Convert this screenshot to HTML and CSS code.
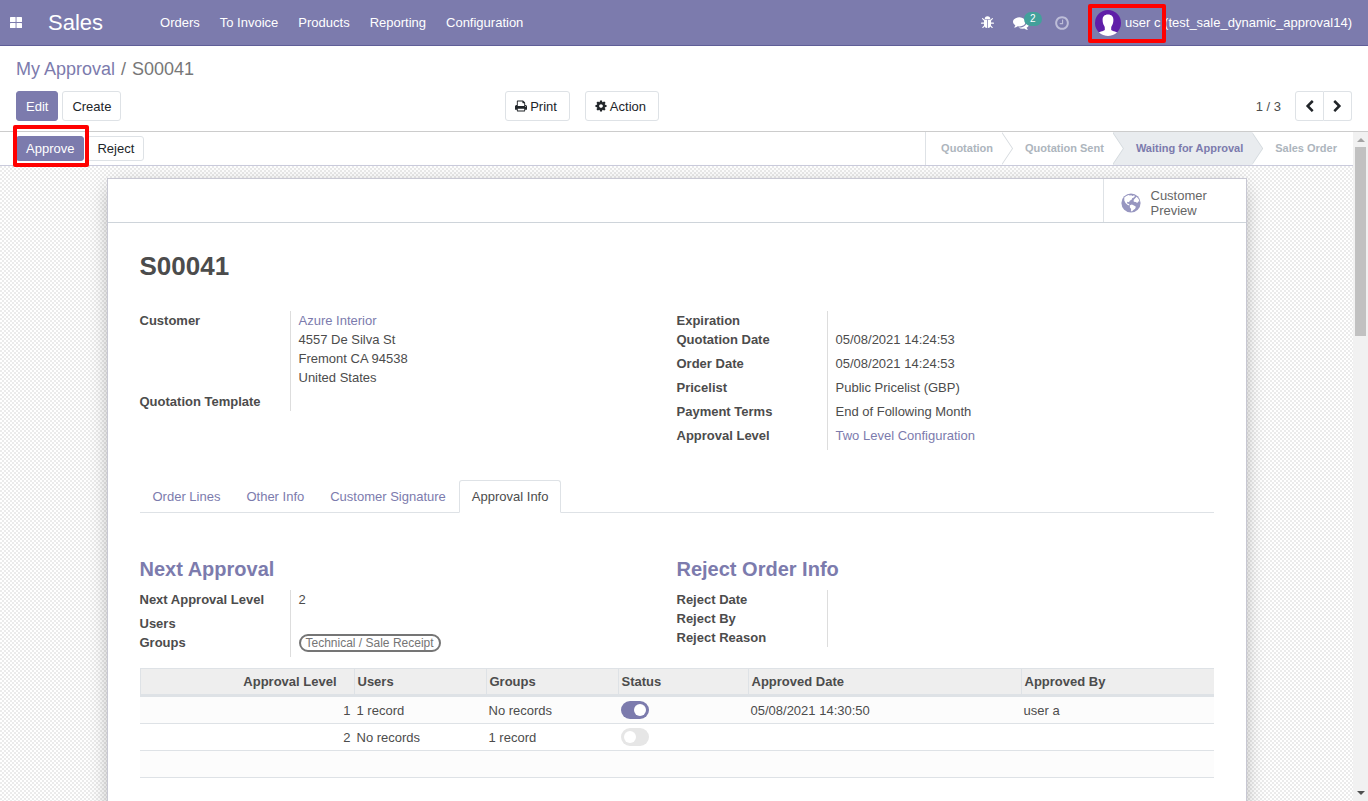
FILE: index.html
```html
<!DOCTYPE html>
<html lang="en">

<head>
    <meta charset="UTF-8">
    <meta name="viewport" content="width=device-width, initial-scale=1.0">
    <title>S00041 - Sales</title>
    <link rel="stylesheet" href="styles.css">
</head>

<body>
    <!-- Top navbar -->
    <header class="navbar">
        <a href="#" class="apps" aria-label="Applications">
            <svg width="12" height="11" viewBox="0 0 12 11" fill="currentColor"><rect width="5.600" height="5" rx=".6"/><rect x="6.500" width="5.500" height="5" rx=".6"/><rect y="6" width="5.600" height="5" rx=".6"/><rect x="6.500" y="6" width="5.500" height="5" rx=".6"/></svg>
        </a>
        <a href="#" class="brand">Sales</a>
        <nav class="menu">
            <a href="#">Orders</a>
            <a href="#">To Invoice</a>
            <a href="#">Products</a>
            <a href="#">Reporting</a>
            <a href="#">Configuration</a>
        </nav>
        <div class="systray">
            <a href="#" class="tray-item" aria-label="Debug">
                <svg width="13" height="13" viewBox="0 0 14 14" fill="currentColor"><path d="M4 3.400a3 3 0 0 1 6 0z"/><path d="M3.200 4h3.400v9C4.400 12.900 3.200 11.400 3.200 9zM7.400 4h3.400v5c0 2.400-1.200 3.900-3.400 4z"/><path d="M1.700 2.800l2 2M12.300 2.800l-2 2M.6 7.700h3M13.400 7.700h-3M1.900 12.400l2.200-2.300M12.100 12.400l-2.200-2.300" stroke="currentColor" stroke-width="1.200" stroke-linecap="round" fill="none"/></svg>
            </a>
            <a href="#" class="tray-item messages" aria-label="Conversations">
                <svg width="16" height="16" viewBox="0 0 1792 1792" fill="currentColor"><path d="M1408 768q0 139-94 257t-256.500 186.500-353.500 68.500q-86 0-176-16-124 88-278 128-36 9-86 16h-3q-11 0-20.500-8t-11.500-21q-1-3-1-6.500t.5-6.500 2-6l2.500-5 3.500-5.500 4-5 4.500-5 4-4.500q5-6 23-25t26-29.500 22.500-29 25-38.500 20.500-44q-124-72-195-177t-71-224q0-139 94-257t256.500-186.500 353.500-68.500 353.500 68.500 256.500 186.500 94 257zm384 256q0 120-71 224.500t-195 176.500q10 24 20.500 44t25 38.500 22.500 29 26 29.500 23 25q1 1 4 4.500t4.500 5 4 5 3.500 5.500l2.500 5 2 6 .5 6.500-1 6.500q-3 14-13 22t-22 7q-50-7-86-16-154-40-278-128-90 16-176 16-271 0-472-132 58 4 88 4 161 0 309-45t264-129q125-92 192-212t67-254q0-77-23-152 129 71 204 178t75 230z"/></svg>
                <span class="badge">2</span>
            </a>
            <a href="#" class="tray-item dim" aria-label="Activities">
                <svg width="16" height="16" viewBox="0 0 1792 1792" fill="currentColor"><path d="M1024 544v448q0 14-9 23t-23 9h-320q-14 0-23-9t-9-23v-64q0-14 9-23t23-9h224v-352q0-14 9-23t23-9h64q14 0 23 9t9 23zm416 352q0-148-73-273t-198-198-273-73-273 73-198 198-73 273 73 273 198 198 273 73 273-73 198-198 73-273zm224 0q0 209-103 385.500t-279.500 279.500-385.500 103-385.500-103-279.500-279.500-103-385.500 103-385.500 279.500-279.500 385.500-103 385.500 103 279.500 279.500 103 385.500z"/></svg>
            </a>
            <a href="#" class="user">
                <svg width="26" height="26" viewBox="0 0 26 26"><defs><clipPath id="face"><circle cx="13" cy="13" r="13"/></clipPath></defs><circle cx="13" cy="13" r="13" fill="#5f1ea8"/><g clip-path="url(#face)" fill="#fff"><path d="M13 4.500c3.600 0 5.400 2.100 5.400 5.300 0 2.300-.5 4.600-1.800 6.400-.3.500-.4 1.100-.4 1.900v2c.6 1 4.300 1 7 3.400V27H2.800v-3.500c2.700-2.400 6.400-2.400 7-3.400v-2c0-.8-.1-1.400-.4-1.900-1.300-1.800-1.800-4.100-1.800-6.400 0-3.200 1.800-5.300 5.400-5.300z"/></g></svg>
                <span>user c (test_sale_dynamic_approval14)</span>
                <span class="mark mark-user"></span>
            </a>
        </div>
    </header>

    <!-- Control panel -->
    <section class="control-panel">
        <div class="breadcrumb">
            <a href="#">My Approval</a>
            <span>/</span>
            <span>S00041</span>
        </div>
        <div class="cp-bottom">
            <div class="cp-left">
                <button class="btn btn-primary">Edit</button>
                <button class="btn">Create</button>
                <div class="cp-actions">
                    <button class="btn"><svg width="12" height="12" viewBox="64 64 1664 1664" fill="currentColor"><path d="M448 1536h896v-256h-896v256zm0-640h896v-384h-160q-40 0-68-28t-28-68v-160h-640v640zm1152 64q0-26-19-45t-45-19-45 19-19 45 19 45 45 19 45-19 19-45zm128 0v416q0 13-9.500 22.500t-22.500 9.500h-224v160q0 40-28 68t-68 28h-960q-40 0-68-28t-28-68v-160h-224q-13 0-22.500-9.500t-9.500-22.500v-416q0-79 56.500-135.500t135.500-56.500h64v-544q0-40 28-68t68-28h672q40 0 88 20t76 48l152 152q28 28 48 76t20 88v256h64q79 0 135.500 56.500t56.500 135.500z"/></svg>Print</button>
                    <button class="btn"><svg width="12" height="12" viewBox="64 64 1664 1664" fill="currentColor"><path d="M1152 896q0-106-75-181t-181-75-181 75-75 181 75 181 181 75 181-75 75-181zm512-109v222q0 12-8 23t-20 13l-185 28q-19 54-39 91 35 50 107 138 10 12 10 25t-9 23q-27 37-99 108t-94 71q-12 0-26-9l-138-108q-44 23-91 38-16 136-29 186-7 28-36 28h-222q-14 0-24.500-8.500t-11.500-21.500l-28-184q-49-16-90-37l-141 107q-10 9-25 9-14 0-25-11-126-114-165-168-7-10-7-23 0-12 8-23 15-21 51-66.500t54-70.500q-27-50-41-99l-183-27q-13-2-21-12.500t-8-23.500v-222q0-12 8-23t19-13l186-28q14-46 39-92-40-57-107-138-10-12-10-24 0-10 9-23 26-36 98.500-107.500t94.500-71.500q13 0 26 10l138 107q44-23 91-38 16-136 29-186 7-28 36-28h222q14 0 24.500 8.500t11.500 21.500l28 184q49 16 90 37l142-107q9-9 24-9 13 0 25 10 129 119 165 170 7 8 7 22 0 12-8 23-15 21-51 66.500t-54 70.500q26 50 41 98l183 28q13 2 21 12.500t8 23.500z"/></svg>Action</button>
                </div>
            </div>
            <div class="pager">
                <span>1 / 3</span>
                <div class="pager-buttons">
                    <button class="btn" aria-label="Previous"><svg width="13" height="13" viewBox="0 0 1792 1792" fill="currentColor"><path d="M1427 301l-531 531 531 531q19 19 19 45t-19 45l-166 166q-19 19-45 19t-45-19l-742-742q-19-19-19-45t19-45l742-742q19-19 45-19t45 19l166 166q19 19 19 45t-19 45z"/></svg></button>
                    <button class="btn" aria-label="Next"><svg width="13" height="13" viewBox="0 0 1792 1792" fill="currentColor"><path d="M1363 877l-742 742q-19 19-45 19t-45-19l-166-166q-19-19-19-45t19-45l531-531-531-531q-19-19-19-45t19-45l166-166q19-19 45-19t45 19l742 742q19 19 19 45t-19 45z"/></svg></button>
                </div>
            </div>
        </div>
    </section>

    <main class="content">
        <div class="form-view">
            <!-- Status bar -->
            <div class="statusbar">
                <div class="status-actions">
                    <div class="marked">
                        <button class="btn btn-sm btn-primary">Approve</button>
                        <span class="mark mark-approve"></span>
                    </div>
                    <button class="btn btn-sm">Reject</button>
                </div>
                <ol class="stages">
                    <li>Quotation</li>
                    <li>Quotation Sent</li>
                    <li class="current">Waiting for Approval</li>
                    <li>Sales Order</li>
                </ol>
            </div>

            <div class="sheet">
                <div class="button-box">
                    <button class="stat-button">
                        <svg width="20" height="20" viewBox="0 0 20 20"><circle cx="10" cy="10" r="9.600" fill="#9796c0"/><path d="M3.300 4.600l2-1.700 2.300-.9 1.200.5 1.500-.3 1.200.9 1.500-.9 1 .9-1.200 1.500-1.700.6-.3 1.300-2 1.200-.8 1.500-1.500-.4-.6 1.200 1 .8 1.200.2.400 1.500-1.800-.5-2.200-2-1.200-2.600zM12.600 6.900l1.500-1.600 1.500-1.500 2 2.100.8 2.600-1.200-.1-.9 1.700-1.600-1-1.900-.4zM9 12.200l1.900-.7 2.100 1 1.900 1.200-.8 2-1.700 1.300-1.500 1.400-1-.3.200-2.200-1.300-1.700z" fill="#fff"/></svg>
                        <span>Customer<br>Preview</span>
                    </button>
                </div>

                <div class="sheet-body">
                    <h1>S00041</h1>

                    <div class="groups">
                        <div class="group">
                            <div class="field"><b>Customer</b><div><a href="#">Azure Interior</a><br>4557 De Silva St<br>Fremont CA 94538<br>United States</div></div>
                            <div class="field empty"><b>Quotation Template</b><div></div></div>
                        </div>
                        <div class="group">
                            <div class="field empty"><b>Expiration</b><div></div></div>
                            <div class="field"><b>Quotation Date</b><div>05/08/2021 14:24:53</div></div>
                            <div class="field"><b>Order Date</b><div>05/08/2021 14:24:53</div></div>
                            <div class="field"><b>Pricelist</b><div>Public Pricelist (GBP)</div></div>
                            <div class="field"><b>Payment Terms</b><div>End of Following Month</div></div>
                            <div class="field"><b>Approval Level</b><div><a href="#">Two Level Configuration</a></div></div>
                        </div>
                    </div>

                    <nav class="tabs">
                        <a href="#">Order Lines</a>
                        <a href="#">Other Info</a>
                        <a href="#">Customer Signature</a>
                        <a href="#" class="active">Approval Info</a>
                    </nav>

                    <!-- Approval Info tab -->
                    <div class="groups">
                        <div class="group">
                            <h2>Next Approval</h2>
                            <div class="field"><b>Next Approval Level</b><div>2</div></div>
                            <div class="field empty"><b>Users</b><div></div></div>
                            <div class="field"><b>Groups</b><div><span class="tag">Technical / Sale Receipt</span></div></div>
                        </div>
                        <div class="group">
                            <h2>Reject Order Info</h2>
                            <div class="field empty"><b>Reject Date</b><div></div></div>
                            <div class="field empty"><b>Reject By</b><div></div></div>
                            <div class="field empty"><b>Reject Reason</b><div></div></div>
                        </div>
                    </div>

                    <table class="list">
                        <colgroup>
                            <col class="col-level">
                            <col class="col-users">
                            <col class="col-groups">
                            <col class="col-status">
                            <col class="col-date">
                            <col>
                        </colgroup>
                        <thead>
                            <tr>
                                <th class="number">Approval Level</th>
                                <th>Users</th>
                                <th>Groups</th>
                                <th>Status</th>
                                <th>Approved Date</th>
                                <th>Approved By</th>
                            </tr>
                        </thead>
                        <tbody>
                            <tr>
                                <td class="number">1</td>
                                <td>1 record</td>
                                <td>No records</td>
                                <td><input type="checkbox" class="toggle" aria-label="Status" checked></td>
                                <td>05/08/2021 14:30:50</td>
                                <td>user a</td>
                            </tr>
                            <tr>
                                <td class="number">2</td>
                                <td>No records</td>
                                <td>1 record</td>
                                <td><input type="checkbox" class="toggle" aria-label="Status"></td>
                                <td></td>
                                <td></td>
                            </tr>
                            <tr>
                                <td colspan="6"></td>
                            </tr>
                        </tbody>
                    </table>
                </div>
            </div>
        </div>

        <div class="scrollbar" aria-hidden="true">
            <span class="arrow-up"></span>
            <span class="thumb"></span>
            <span class="arrow-down"></span>
        </div>
    </main>
</body>

</html>
```
FILE: styles.css
```css
* {
    box-sizing: border-box;
}

body {
    margin: 0;
    height: 100vh;
    display: flex;
    flex-direction: column;
    overflow: hidden;
    font-family: "Liberation Sans", Arial, sans-serif;
    font-size: 13px;
    line-height: 19px;
    color: #4c4c4c;
    background: white;
}

a {
    color: #7c7bad;
    text-decoration: none;
}

svg {
    flex: none;
    display: block;
}

/* Navbar */
.navbar {
    flex: none;
    display: flex;
    align-items: center;
    height: 46px;
    padding: 0 16px 0 10px;
    background: #7c7bad;
    border-bottom: 1px solid #5f5e97;
}

.navbar a {
    color: white;
}

.brand {
    margin-left: 26px;
    font-size: 22px;
    line-height: 44px;
}

.menu {
    display: flex;
    gap: 20px;
    margin-left: 57px;
}

.systray {
    display: flex;
    align-items: center;
    margin-left: auto;
}

.tray-item {
    position: relative;
    margin-right: 25px;
}

.navbar .dim {
    color: #bdbdd8;
}

.messages {
    margin-left: -6px;
}

.badge {
    position: absolute;
    left: 11px;
    top: -3px;
    padding: 0 6px;
    border-radius: 7px;
    background: #42a09b;
    font-size: 10px;
    line-height: 14px;
}

.user {
    position: relative;
    display: flex;
    align-items: center;
    gap: 4px;
}

/* Red highlight boxes */
.mark {
    position: absolute;
    border: 4px solid red;
    border-radius: 2px;
    pointer-events: none;
}

.mark-user {
    left: -7px;
    top: -6px;
    width: 78px;
    height: 39px;
}

.mark-approve {
    left: -3px;
    top: -11px;
    width: 76px;
    height: 42px;
}

.marked {
    position: relative;
    display: flex;
}

/* Control panel */
.control-panel {
    flex: none;
    padding: 10px 16px;
    border-bottom: 1px solid #ccc;
}

.breadcrumb {
    display: flex;
    gap: 6px;
    font-size: 18px;
    line-height: 26px;
    color: #777;
}

.cp-bottom {
    display: flex;
    margin-top: 9px;
}

.cp-left {
    display: flex;
    gap: 4px;
    width: 50%;
    padding-right: 25px;
}

.cp-actions {
    display: flex;
    gap: 15px;
    margin-left: auto;
}

.btn {
    display: flex;
    align-items: center;
    gap: 3px;
    height: 30px;
    padding: 0 9px;
    border: 1px solid #dee2e6;
    border-radius: 3px;
    background: white;
    color: #212529;
    font: inherit;
    cursor: pointer;
}

.cp-actions .btn {
    padding-right: 12px;
}

.btn-primary {
    background: #7c7bad;
    border-color: #7c7bad;
    color: white;
}

.btn-sm {
    height: 25px;
}

.pager {
    display: flex;
    align-items: center;
    gap: 14px;
    margin-left: auto;
}

.pager-buttons {
    display: flex;
}

.pager-buttons .btn {
    padding: 0 7px;
}

.pager-buttons .btn:first-child {
    border-radius: 3px 0 0 3px;
}

.pager-buttons .btn:last-child {
    border-left: none;
    border-radius: 0 3px 3px 0;
}

/* Form view */
.content {
    flex: 1;
    display: flex;
    min-height: 0;
}

.form-view {
    flex: 1;
    background: repeating-conic-gradient(#ebebeb 0 25%, white 0 50%) 0 0 / 4px 4px;
}

.statusbar {
    display: flex;
    justify-content: space-between;
    height: 34px;
    padding-left: 16px;
    background: white;
    border-bottom: 1px solid #cacbdc;
}

.status-actions {
    display: flex;
    align-items: center;
    gap: 3px;
}

.stages {
    display: flex;
    margin: 0;
    padding: 0;
    list-style: none;
    border-left: 1px solid #dee2e6;
    font-size: 11px;
    font-weight: bold;
    line-height: 33px;
    color: #adb5bd;
}

.stages li {
    position: relative;
    padding: 0 9px 0 23px;
    background: white;
}

.stages li:first-child {
    padding-left: 15px;
}

.stages li:last-child {
    padding-right: 16px;
}

.stages .current {
    background: #e9ecef;
    color: #7c7bad;
}

.stages li:not(:last-child)::before,
.stages li:not(:last-child)::after {
    content: "";
    position: absolute;
    z-index: 1;
    top: 0;
    left: 100%;
    width: 11px;
    height: 100%;
    background: #d5dade;
    clip-path: polygon(0 0, 100% 50%, 0 100%);
}

.stages li:not(:last-child)::after {
    left: calc(100% - 1px);
    background: inherit;
}

/* Sheet */
.sheet {
    max-width: 1140px;
    margin: 12px auto;
    background: white;
    border: 1px solid #c8c8d3;
    box-shadow: 0 5px 20px -5px rgba(0, 0, 0, .4);
}

.button-box {
    display: flex;
    justify-content: flex-end;
    height: 44px;
    border-bottom: 1px solid #ced4da;
}

.stat-button {
    display: flex;
    align-items: center;
    gap: 10px;
    width: 143px;
    padding: 4px 17px 0;
    border: none;
    border-left: 1px solid #dee2e6;
    background: white;
    color: #666;
    font: inherit;
    line-height: 15px;
    text-align: left;
    cursor: pointer;
}

.sheet-body {
    padding: 28px 32px 64px;
}

h1 {
    margin: 0 0 29px;
    font-size: 26px;
    line-height: 31px;
}

h2 {
    margin: 0 0 9px;
    font-size: 20px;
    line-height: 24px;
    color: #7c7bad;
}

.groups {
    display: grid;
    grid-template-columns: 1fr 1fr;
    align-items: start;
}

.field {
    display: grid;
    grid-template-columns: 150px 1fr;
}

.field > div {
    min-height: 24px;
    padding: 0 8px 5px;
    border-left: 1px solid #ddd;
}

.field.empty > div {
    min-height: 19px;
    padding-bottom: 0;
}

.tag {
    display: inline-block;
    padding: 0 5px;
    border: 2px solid #757575;
    border-radius: 9px;
    font-size: 12px;
    line-height: 14px;
    color: #757575;
}

.tabs {
    display: flex;
    margin: 30px 0 44px;
    border-bottom: 1px solid #dee2e6;
}

.tabs a {
    margin-bottom: -1px;
    padding: 6px 12px;
    border: 1px solid transparent;
    border-radius: 3px 3px 0 0;
}

.tabs .active {
    border-color: #dee2e6;
    border-bottom-color: white;
    background: white;
    color: #4c4c4c;
}

/* Approval lines */
.list {
    width: 100%;
    margin-top: 11px;
    table-layout: fixed;
    border-spacing: 0;
}

.col-level {
    width: 214px;
}

.col-users,
.col-groups {
    width: 132px;
}

.col-status {
    width: 130px;
}

.col-date {
    width: 273px;
}

.list th {
    height: 29px;
    padding: 0 3px;
    background: #eee;
    border: 1px solid #dee2e6;
    border-width: 1px 0 3px 1px;
    text-align: left;
}

.list td {
    height: 27px;
    padding: 0 3px;
    border-bottom: 1px solid #dee2e6;
}

.list tbody tr:nth-child(odd) {
    background: #fcfcfc;
}

.list .number {
    text-align: right;
}

.list th.number {
    padding-right: 17px;
}

.toggle {
    display: block;
    appearance: none;
    width: 28px;
    height: 18px;
    margin: 0;
    padding: 3px;
    border-radius: 9px;
    background: #e6e6e6;
}

.toggle::before {
    content: "";
    display: block;
    width: 12px;
    height: 12px;
    border-radius: 50%;
    background: white;
}

.toggle:checked {
    background: #7c7bad;
}

.toggle:checked::before {
    margin-left: auto;
}

/* Scrollbar */
.scrollbar {
    display: flex;
    flex-direction: column;
    align-items: center;
    width: 15px;
    padding: 6px 0;
    background: #f1f1f1;
}

.thumb {
    width: 11px;
    height: 189px;
    margin-top: 5px;
    background: #c1c1c1;
}

.arrow-up,
.arrow-down {
    border: 4px solid transparent;
    border-top-width: 0;
    border-bottom: 4px solid #a3a3a3;
}

.arrow-down {
    margin-top: auto;
    border-top: 4px solid #505050;
    border-bottom-width: 0;
}
```
